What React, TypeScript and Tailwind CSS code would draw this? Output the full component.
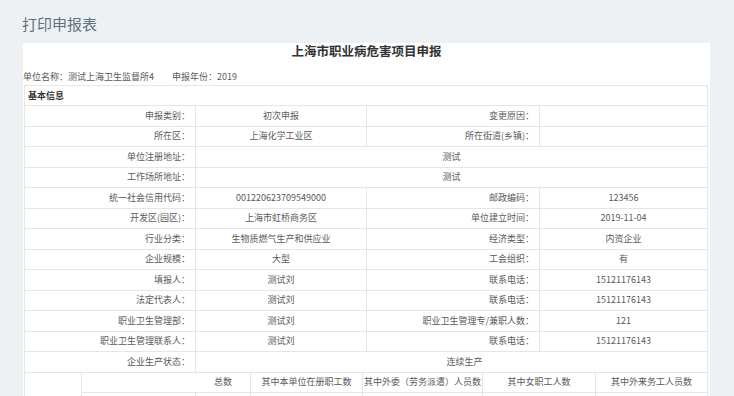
import React from "react";

const B = "border-[#e4e6e8]";

function Cell({ w, children, align = "center", border = true, className = "" }: { w: number; children?: React.ReactNode; align?: "center" | "right" | "left"; border?: boolean; className?: string }) {
  const al = align === "center" ? "justify-center" : align === "right" ? "justify-end pr-[5px]" : "justify-start pl-[4px]";
  return (
    <div
      className={`flex h-full shrink-0 items-center ${al} ${border ? `border-r ${B}` : ""} ${className}`}
      style={{ width: w }}
    >
      {children}
    </div>
  );
}

type Row = [string, string, string?, string?];

const rows: Row[] = [
  ["申报类别：", "初次申报", "变更原因：", ""],
  ["所在区：", "上海化学工业区", "所在街道(乡镇)：", ""],
  ["单位注册地址：", "测试"],
  ["工作场所地址：", "测试"],
  ["统一社会信用代码：", "001220623709549000", "邮政编码：", "123456"],
  ["开发区(园区)：", "上海市虹桥商务区", "单位建立时间：", "2019-11-04"],
  ["行业分类：", "生物质燃气生产和供应业", "经济类型：", "内资企业"],
  ["企业规模：", "大型", "工会组织：", "有"],
  ["填报人：", "测试刘", "联系电话：", "15121176143"],
  ["法定代表人：", "测试刘", "联系电话：", "15121176143"],
  ["职业卫生管理部：", "测试刘", "职业卫生管理专/兼职人数：", "121"],
  ["职业卫生管理联系人：", "测试刘", "联系电话：", "15121176143"],
];

const subW = [114, 55, 112, 120, 113, 112];

export default function App() {
  return (
    <div className="h-[396px] w-[734px] overflow-hidden bg-[#eef1f4] font-['Noto_Sans_CJK_SC','Noto_Sans',sans-serif] text-[#5a5a5a]">
      <div className="pl-[22px] pt-[14px] text-[15px] leading-[20px] text-[#62717f]">打印申报表</div>
      <div className="ml-[23px] mt-[9px] w-[687px] bg-white">
        <div className="pt-[1px] text-center text-[12.5px] font-bold leading-[14px] text-[#333]">上海市职业病危害项目申报</div>
        <div className="mt-[13px] flex h-[12px] items-center text-[9px] leading-[12px]">
          <span className="w-[149px]">单位名称：测试上海卫生监督所4</span>
          <span>申报年份：2019</span>
        </div>
        <div className={`ml-[1px] mt-[2px] w-[684px] border-l border-t ${B} text-[9px] leading-[12px]`}>
          <div className={`flex h-[20px] items-center border-b border-r ${B} pl-[3px] font-bold text-[#333]`}>基本信息</div>
          {rows.map((r, i) => (
            <div key={i} className={`flex h-[20.5px] border-b ${B}`}>
              <Cell w={171} align="right">{r[0]}</Cell>
              {r.length === 2 ? (
                <Cell w={512}>{r[1]}</Cell>
              ) : (
                <>
                  <Cell w={171}>{r[1]}</Cell>
                  <Cell w={173} align="right">{r[2]}</Cell>
                  <Cell w={168}>{r[3]}</Cell>
                </>
              )}
            </div>
          ))}
          <div className={`flex h-[20.5px] border-b ${B}`}>
            <Cell w={171} align="right">企业生产状态：</Cell>
            <Cell w={512} className="pl-[26px]">连续生产</Cell>
          </div>
          <div className="flex">
            <div className={`w-[57px] shrink-0 border-r ${B}`} />
            <div className="flex flex-col">
              <div className={`flex h-[20px] border-b ${B}`}>
                <Cell w={subW[0]} border={false} />
                <Cell w={subW[1]}>总数</Cell>
                <Cell w={subW[2]}>其中本单位在册职工数</Cell>
                <Cell w={subW[3]}>其中外委（劳务派遣）人员数</Cell>
                <Cell w={subW[4]}>其中女职工人数</Cell>
                <Cell w={subW[5]}>其中外来务工人员数</Cell>
              </div>
              <div className={`flex h-[21px] border-b ${B}`}>
                <Cell w={subW[0]} align="right">在岗职工：</Cell>
                <Cell w={subW[1]}>121</Cell>
                <Cell w={subW[2]}>122</Cell>
                <Cell w={subW[3]}>12</Cell>
                <Cell w={subW[4]}>0</Cell>
                <Cell w={subW[5]}>0</Cell>
              </div>
            </div>
          </div>
        </div>
      </div>
    </div>
  );
}
